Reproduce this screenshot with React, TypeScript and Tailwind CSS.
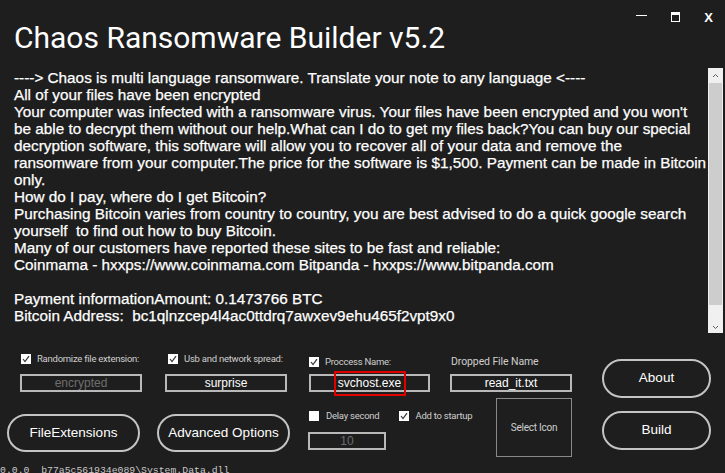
import React from "react";

const noteLines = [
  "----> Chaos is multi language ransomware. Translate your note to any language <----",
  "All of your files have been encrypted",
  "Your computer was infected with a ransomware virus. Your files have been encrypted and you won't",
  "be able to decrypt them without our help.What can I do to get my files back?You can buy our special",
  "decryption software, this software will allow you to recover all of your data and remove the",
  "ransomware from your computer.The price for the software is $1,500. Payment can be made in Bitcoin",
  "only.",
  "How do I pay, where do I get Bitcoin?",
  "Purchasing Bitcoin varies from country to country, you are best advised to do a quick google search",
  "yourself  to find out how to buy Bitcoin.",
  "Many of our customers have reported these sites to be fast and reliable:",
  "Coinmama - hxxps://www.coinmama.com Bitpanda - hxxps://www.bitpanda.com",
  "",
  "Payment informationAmount: 0.1473766 BTC",
  "Bitcoin Address:  bc1qlnzcep4l4ac0ttdrq7awxev9ehu465f2vpt9x0",
];

function CheckBox({ checked }: { checked: boolean }) {
  return (
    <div className="w-[10px] h-[10px] bg-white flex items-center justify-center shrink-0">
      {checked && (
        <svg width="8" height="8" viewBox="0 0 8 8">
          <polyline points="1,4 3,6.5 7,1.2" fill="none" stroke="#333" strokeWidth="1.2" />
        </svg>
      )}
    </div>
  );
}

function Label({ children, className = "" }: { children: React.ReactNode; className?: string }) {
  return (
    <span
      className={
        "text-[9.5px] tracking-[-0.25px] text-[#cfcfcf] leading-none font-['Roboto',sans-serif] whitespace-nowrap " +
        className
      }
    >
      {children}
    </span>
  );
}

function Field({
  value,
  dim,
  className = "",
  children,
}: {
  value: string;
  dim?: boolean;
  className?: string;
  children?: React.ReactNode;
}) {
  return (
    <div
      className={
        "relative h-[18px] border-2 border-[#b9b9b9] flex items-center justify-center text-[12px] font-['Liberation_Sans',sans-serif] " +
        (dim ? "text-[#6e6e6e] " : "text-white ") +
        className
      }
    >
      {value}
      {children}
    </div>
  );
}

function PillButton({ label, className = "" }: { label: string; className?: string }) {
  return (
    <div
      className={
        "border-2 border-[#c4c4c4] rounded-full flex items-center justify-center text-white text-[13.5px] font-['Liberation_Sans',sans-serif] " +
        className
      }
    >
      {label}
    </div>
  );
}

export default function App() {
  return (
    <div className="w-[725px] h-[473px] overflow-hidden bg-[#1e1e1e] flex flex-col">
      {/* header */}
      <div className="h-[66px] flex shrink-0">
        <div className="pl-[14px] pt-[23px] text-[30px] leading-none text-white font-['Roboto',sans-serif]">
          Chaos Ransomware Builder v5.2
        </div>
        <div className="ml-auto flex items-start pt-[11px] pr-[12px] text-white">
          <div className="w-[11px] h-[1px] bg-white mt-[4px]" />
          <div className="ml-[24px] w-[9px] h-[10px] border border-white border-t-[3px] mt-[1px]" />
          <div className="ml-[24px] text-[13px] leading-none font-bold font-['Liberation_Sans',sans-serif]">
            X
          </div>
        </div>
      </div>

      {/* note text box */}
      <div className="h-[269px] flex shrink-0 ml-[8px]">
        <div className="flex-1 pl-[6px] pt-[3px] text-[15.3px] leading-[17px] text-white [-webkit-text-stroke:0.25px_white] font-['Liberation_Sans',sans-serif] whitespace-pre overflow-hidden">
          {noteLines.map((line, i) => (
            <div key={i} className="h-[17px]">
              {line}
            </div>
          ))}
        </div>
        <div className="w-[15px] mt-[2px] mb-[2px] mr-[2px] bg-[#f0f0f0] flex flex-col">
          <div className="h-[15px] flex items-center justify-center">
            <svg width="7" height="5" viewBox="0 0 7 5">
              <polyline points="1,4 3.5,1.5 6,4" fill="none" stroke="#606060" strokeWidth="1" />
            </svg>
          </div>
          <div className="h-[222px] mx-[1px] bg-[#cdcdcd]" />
          <div className="flex-1 flex items-end justify-center pb-[3px]">
            <svg width="7" height="5" viewBox="0 0 7 5">
              <polyline points="1,1 3.5,3.5 6,1" fill="none" stroke="#606060" strokeWidth="1" />
            </svg>
          </div>
        </div>
      </div>

      {/* options */}
      <div className="h-[130px] flex shrink-0">
        {/* column A */}
        <div className="w-[150px] flex flex-col">
          <div className="mt-[19px] ml-[21px] h-[9px] flex items-center gap-[6px]">
            <CheckBox checked />
            <Label>Randomize file extension:</Label>
          </div>
          <Field value="encrypted" dim className="mt-[11px] ml-[20px] w-[122px]" />
          <PillButton label="FileExtensions" className="mt-[22px] ml-[7px] w-[133px] h-[38px]" />
        </div>

        {/* column B */}
        <div className="w-[150px] flex flex-col">
          <div className="mt-[19px] ml-[18px] h-[9px] flex items-center gap-[6px]">
            <CheckBox checked />
            <Label>Usb and network spread:</Label>
          </div>
          <Field value="surprise" className="mt-[11px] ml-[15px] w-[122px]" />
          <PillButton label="Advanced Options" className="mt-[22px] ml-[7px] w-[133px] h-[38px]" />
        </div>

        {/* column C */}
        <div className="w-[144px] flex flex-col">
          <div className="mt-[22px] ml-[9px] h-[10px] flex items-center gap-[6px]">
            <CheckBox checked />
            <Label>Proccess Name:</Label>
          </div>
          <Field value="svchost.exe" className="mt-[7px] ml-[9px] w-[121px]">
            <div className="absolute left-[23px] top-[-5px] w-[72px] h-[25px] border-2 border-[#e00000]" />
          </Field>
          <div className="mt-[18px] ml-[9px] h-[11px] flex items-center">
            <CheckBox checked={false} />
            <Label className="ml-[7px]">Delay second</Label>
            <div className="ml-[20px] flex items-center gap-[6px]">
              <CheckBox checked />
              <Label>Add to startup</Label>
            </div>
          </div>
          <Field value="10" dim className="mt-[11px] ml-[8px] w-[78px]" />
        </div>

        {/* column D */}
        <div className="w-[146px] flex flex-col">
          <div className="mt-[21px] ml-[7px] h-[12px] flex items-center">
            <span className="text-[10.5px] leading-none tracking-[-0.1px] text-[#cfcfcf] font-['Roboto',sans-serif]">
              Dropped File Name
            </span>
          </div>
          <Field value="read_it.txt" className="mt-[6px] ml-[6px] w-[122px]" />
          <div className="mt-[6px] ml-[52px] w-[76px] h-[59px] border border-[#8a8a8a] flex items-center justify-center">
            <Label className="text-[10px]">Select Icon</Label>
          </div>
        </div>

        {/* column E */}
        <div className="flex-1 flex flex-col">
          <PillButton label="About" className="mt-[24px] ml-[12px] w-[109px] h-[39px]" />
          <PillButton label="Build" className="mt-[13px] ml-[12px] w-[109px] h-[39px]" />
        </div>
      </div>

      <div className="pt-[1px] text-[9.8px] leading-none text-[#c8c8c8] font-['Liberation_Mono',monospace] whitespace-pre">
        0.0.0__b77a5c561934e089\System.Data.dll
      </div>
    </div>
  );
}
